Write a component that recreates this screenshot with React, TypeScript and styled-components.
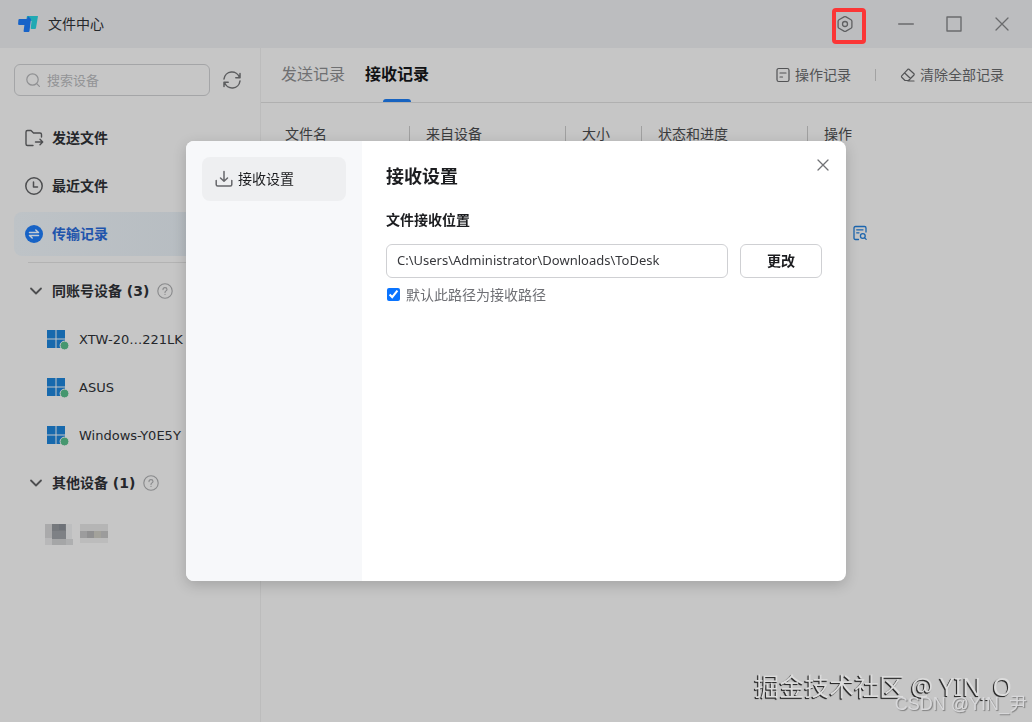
import React from "react";
import styled, { createGlobalStyle, css } from "styled-components";

const GlobalStyle = createGlobalStyle`
  *, *::before, *::after { box-sizing: border-box; }
  body {
    margin: 0;
    background: #c6c6c6;
    color: #25272b;
    font-family: "Noto Sans", "Noto Sans CJK SC", sans-serif;
    font-size: 14px;
    line-height: 20px;
  }
  button, input {
    font: inherit;
    color: inherit;
  }
  button {
    padding: 0;
    border: 0;
    background: none;
    cursor: pointer;
  }
  svg { display: block; flex: none; }
`;

const Window = styled.div`
  min-height: 100vh;
  display: flex;
  flex-direction: column;
  overflow: hidden;
`;

const TitleBar = styled.header`
  height: 48px;
  padding: 0 22px 0 18px;
  display: flex;
  align-items: center;
  background: #bcbdbf;
`;

const Title = styled.h1`
  margin: 0 auto 0 10px;
  font-size: 14px;
  font-weight: 400;
`;

const WindowControls = styled.div`
  display: flex;
  align-items: center;
  gap: 32px;
  color: #6a6b6d;
`;

const ControlButton = styled.button`
  width: 16px;
  height: 16px;
  display: grid;
  place-items: center;
`;

const RefreshButton = styled.button`
  width: 20px;
  height: 20px;
`;

const SettingsHighlight = styled.div`
  height: 36px;
  width: 34px;
  margin: 4px 32px 0 0;
  padding: 0 0 4px 1px;
  display: flex;
  align-items: center;
  border: 4px solid #fb3636;
  border-radius: 4px;
  color: #5f6062;
`;

const Body = styled.div`
  flex: 1;
  display: flex;
`;

const Sidebar = styled.aside`
  width: 261px;
  flex: none;
  padding: 16px 14px;
  border-right: 1px solid #bcbcbc;
`;

const SearchRow = styled.div`
  display: flex;
  align-items: center;
  gap: 12px;
  color: #5c5d5f;
`;

const SearchField = styled.label`
  width: 196px;
  height: 32px;
  padding: 0 11px 1px;
  display: flex;
  align-items: center;
  gap: 7px;
  border: 1px solid #a4a5a7;
  border-radius: 6px;
  color: #8f9092;
`;

const SearchInput = styled.input`
  min-width: 0;
  flex: 1;
  padding: 0;
  border: 0;
  outline: 0;
  background: none;
  font-size: 13px;
  &::placeholder { color: #939496; opacity: 1; }
`;

const Nav = styled.nav`
  margin-top: 20px;
  padding-bottom: 6px;
  display: flex;
  flex-direction: column;
  gap: 4px;
`;

const NavItem = styled.button<{ $active?: boolean }>`
  height: 44px;
  padding: 0 10px;
  display: flex;
  align-items: center;
  gap: 8px;
  border-radius: 8px;
  font-weight: 700;
  color: #25272b;
  svg { color: #4d4e50; }
  ${(p) =>
    p.$active &&
    css`
      background: linear-gradient(90deg, #bec3c7, #b5bbc0);
      color: #1f54ac;
      svg { color: #1763c6; }
    `}
`;

const Divider = styled.hr`
  margin: 0 0 4px 14px;
  border: 0;
  border-top: 1px solid #b3b3b3;
`;

const Group = styled.section`
  padding-left: 14px;
`;

const GroupHeader = styled.h2`
  height: 48px;
  margin: 0;
  display: flex;
  align-items: center;
  gap: 8px;
  font-size: 14px;
  font-weight: 700;
  svg { color: #4d4e50; }
`;

const Count = styled.span`
  font-family: "DejaVu Sans", sans-serif;
  white-space: pre;
`;

const HelpIcon = styled.span`
  svg { color: #88898b; }
`;

const DeviceList = styled.ul`
  margin: 0;
  padding: 0;
  list-style: none;
`;

const Device = styled.li`
  height: 48px;
  padding: 2px 0 0 19px;
  display: flex;
  align-items: center;
  gap: 10px;
  font-family: "DejaVu Sans", sans-serif;
  font-size: 13px;
  white-space: nowrap;
`;

const HiddenRow = styled(Device)`
  height: 54px;
  padding-left: 17px;
`;

const Main = styled.main`
  flex: 1;
  min-width: 0;
`;

const TabBar = styled.div`
  height: 55px;
  padding: 0 28px 0 20px;
  display: flex;
  justify-content: space-between;
  border-bottom: 1px solid #b0b0b0;
`;

const Tabs = styled.div`
  display: flex;
  gap: 20px;
`;

const Tab = styled.button<{ $active?: boolean }>`
  position: relative;
  height: 54px;
  padding-bottom: 2px;
  font-size: 16px;
  color: #6f7072;
  ${(p) =>
    p.$active &&
    css`
      color: #111214;
      font-weight: 700;
      &::after {
        content: "";
        position: absolute;
        left: 18px;
        bottom: 0;
        width: 28px;
        height: 3px;
        border-radius: 3px 3px 0 0;
        background: #1763c0;
      }
    `}
`;

const Actions = styled.div`
  display: flex;
  align-items: center;
  gap: 24px;
`;

const Separator = styled.span`
  width: 1px;
  height: 12px;
  background: #a2a2a2;
`;

const ActionButton = styled.button`
  display: flex;
  align-items: center;
  gap: 4px;
  color: #525355;
`;

const Records = styled.table`
  width: calc(100% - 8px);
  margin: 20px 0 0 8px;
  table-layout: fixed;
  border-collapse: collapse;
`;

const HeadCell = styled.th<{ $width?: number }>`
  width: ${(p) => (p.$width ? `${p.$width}px` : "auto")};
  height: 22px;
  padding: 0;
  font-weight: 400;
  text-align: left;
  color: #3a3b3d;
  span {
    display: block;
    height: 16px;
    line-height: 16px;
    padding-left: 16px;
  }
  &:not(:first-child) span {
    border-left: 1px solid #a0a0a0;
  }
`;

const Cell = styled.td`
  height: 176px;
  padding: 0 0 0 45px;
`;

const DetailsButton = styled.button`
  display: block;
  color: #1b65ae;
`;

const Backdrop = styled.div`
  position: fixed;
  inset: 0;
  display: grid;
  place-items: center;
`;

const Dialog = styled.section`
  position: relative;
  width: 660px;
  max-width: 100%;
  min-height: 440px;
  display: flex;
  border-radius: 8px;
  overflow: hidden;
  background: #fff;
  box-shadow: 0 4px 14px rgba(0, 0, 0, 0.18);
`;

const DialogNav = styled.nav`
  width: 176px;
  padding: 16px;
  background: #f7f8fa;
`;

const DialogNavItem = styled.button`
  width: 100%;
  height: 44px;
  padding: 0 13px;
  display: flex;
  align-items: center;
  gap: 5px;
  border-radius: 8px;
  background: #eeeff1;
  color: #1c1d20;
  svg { color: #66676b; }
`;

const DialogContent = styled.div`
  flex: 1;
  padding: 24px;
`;

const DialogTitle = styled.h2`
  margin: 0;
  font-size: 18px;
  line-height: 22px;
  color: #1c1d20;
`;

const FieldLabel = styled.label`
  display: block;
  margin-top: 23px;
  font-weight: 700;
  color: #1c1d20;
`;

const PathRow = styled.div`
  margin-top: 14px;
  display: flex;
  gap: 12px;
`;

const PathInput = styled.input`
  flex: 1;
  min-width: 0;
  height: 34px;
  padding: 0 10px 2px;
  border: 1px solid #cfd0d3;
  border-radius: 6px;
  background: #fff;
  color: #37383c;
  font-size: 13px;
`;

const ChangeButton = styled.button`
  width: 82px;
  height: 34px;
  border: 1px solid #cfd0d3;
  border-radius: 6px;
  font-weight: 700;
  color: #1c1d20;
`;

const CheckLabel = styled.label`
  margin-top: 7px;
  display: flex;
  align-items: center;
  gap: 6px;
  color: #6e6f74;
`;

const Checkbox = styled.input`
  width: 13px;
  height: 13px;
  margin: 0 0 2px 1px;
  accent-color: #0a74ff;
`;

const CloseButton = styled.button`
  position: absolute;
  top: 16px;
  right: 15px;
  width: 16px;
  height: 16px;
  display: grid;
  place-items: center;
  color: #707175;
`;

const Watermark = styled.div`
  position: fixed;
  right: 20px;
  bottom: 18px;
  font-size: 25px;
  line-height: 36px;
  color: #dcdcdc;
  text-shadow: -1px 1px 0 #2c2c2c, -1px 1px 1px #2c2c2c;
  white-space: nowrap;
`;

const Credit = styled.div`
  position: fixed;
  right: 5px;
  bottom: 6px;
  font-family: "Liberation Sans", "Noto Sans CJK SC", sans-serif;
  font-size: 18px;
  line-height: 24px;
  color: #d8d8da;
  text-shadow: 1px 1px 1px #808080;
  white-space: nowrap;
`;

type IconProps = { size?: number; width?: number; children: React.ReactNode };

const Icon = ({ size = 20, width = 1.4, children }: IconProps) => (
  <svg width={size} height={size} viewBox={`0 0 ${size} ${size}`} fill="none" stroke="currentColor"
    strokeWidth={width} strokeLinecap="round" strokeLinejoin="round" aria-hidden="true">
    {children}
  </svg>
);

const Logo = () => (
  <svg width="20" height="18" viewBox="0 0 20 18" aria-hidden="true">
    <path d="M9 1H20L18 13Q17.800 14 17 14H13.500Q12.500 14 12.700 13L13.600 6H8Z" fill="#20a9b3" />
    <path d="M1.500 4H9L10 1L13 4L11.500 16Q11.300 17 10.500 17H6.500Q5.400 17 5.600 16L6.400 10H1.200Q0 10 .1 9L.4 5Q.5 4 1.500 4Z" fill="#1763c8" />
  </svg>
);

const Cross = ({ size, reach }: { size: number; reach: number }) => {
  const a = size / 2 - reach;
  const b = size / 2 + reach;
  return (
    <Icon size={size} width={1.3}>
      <path d={`M${a} ${a}L${b} ${b}M${b} ${a}L${a} ${b}`} />
    </Icon>
  );
};

const Chevron = () => (
  <Icon size={16} width={1.8}><path d="M3 5.500L8 10.500L13 5.500" /></Icon>
);

const Help = () => (
  <HelpIcon>
    <Icon size={16} width={1.1}>
      <circle cx="8" cy="8" r="7.200" />
      <path d="M6 6.600Q6 4.600 8 4.600T10 6.400Q10 7.300 9 7.900Q8 8.500 8 9.400M8 11.400V11.500" />
    </Icon>
  </HelpIcon>
);

const WindowsDevice = () => (
  <svg width="22" height="22" viewBox="0 0 22 22" aria-hidden="true">
    <path d="M0 1H8.500V9.500H0ZM9.500 1H18V9.500H9.500ZM0 10.500H8.500V19H0ZM9.500 10.500H18V19H9.500Z" fill="#1769ad" />
    <circle cx="17.500" cy="16.500" r="4.400" fill="#46976f" stroke="#c6c6c6" />
  </svg>
);

const mosaic = [
  [0, 0, 7, 14, "#aaaaab"], [7, 0, 14, 7, "#76797d"], [7, 7, 14, 8, "#7e8185"], [14, 0, 6, 6, "#6e7278"],
  [21, 0, 6, 15, "#bdbebf"], [0, 14, 7, 7, "#b8b8b9"], [7, 15, 14, 6, "#a5a6a7"], [21, 15, 7, 6, "#aeafb0"],
  [35, 0, 28, 7, "#b5b5b5"], [35, 7, 7, 7, "#9c9c9d"], [42, 7, 7, 7, "#909091"], [49, 7, 7, 7, "#a3a29b"],
  [56, 7, 7, 7, "#9c9c9c"], [35, 14, 28, 5, "#bcbcbc"],
] as const;

const HiddenDevice = () => (
  <svg width="63" height="22" viewBox="0 0 63 22" role="img" aria-label="设备">
    {mosaic.map(([x, y, w, h, fill], i) => (
      <rect key={i} x={x} y={y} width={w} height={h} fill={fill} />
    ))}
  </svg>
);

const devices = ["XTW-20…221LK", "ASUS", "Windows-Y0E5Y"];

const columns: { label: string; width?: number }[] = [
  { label: "文件名", width: 140 },
  { label: "来自设备", width: 156 },
  { label: "大小", width: 76 },
  { label: "状态和进度", width: 166 },
  { label: "操作" },
];

export default function App() {
  return (
    <>
      <GlobalStyle />
      <Window>
        <TitleBar>
          <Logo />
          <Title>文件中心</Title>
          <SettingsHighlight>
            <ControlButton aria-label="设置">
              <Icon size={16} width={1.3}>
                <path d="M7 .9Q8 .4 9 .9L14 3.700Q14.900 4.300 14.900 5.300V10.700Q14.900 11.700 14 12.300L9 15.100Q8 15.600 7 15.100L2 12.300Q1.100 11.700 1.100 10.700V5.300Q1.100 4.300 2 3.700Z" />
                <circle cx="8" cy="8" r="2.500" />
              </Icon>
            </ControlButton>
          </SettingsHighlight>
          <WindowControls>
            <ControlButton aria-label="最小化">
              <Icon size={16}><path d="M.7 8H15.300" /></Icon>
            </ControlButton>
            <ControlButton aria-label="最大化">
              <Icon size={16}><path d="M1 1H15V15H1Z" /></Icon>
            </ControlButton>
            <ControlButton aria-label="关闭">
              <Cross size={16} reach={6} />
            </ControlButton>
          </WindowControls>
        </TitleBar>

        <Body>
          <Sidebar>
            <SearchRow>
              <SearchField>
                <Icon size={14} width={1.2}>
                  <circle cx="6.500" cy="6.500" r="5.700" />
                  <path d="M10.700 10.700L13.400 13.400" />
                </Icon>
                <SearchInput type="search" placeholder="搜索设备" aria-label="搜索设备" />
              </SearchField>
              <RefreshButton aria-label="刷新">
                <Icon size={20} width={1.5}>
                  <path d="M2 9A8 8 0 0 1 17.500 7.500M18 3.500V7.800H13.800M18 11A8 8 0 0 1 2.500 12.500M2 16.500V12.200H6.200" />
                </Icon>
              </RefreshButton>
            </SearchRow>

            <Nav>
              <NavItem>
                <Icon>
                  <path d="M9 17.500H3.500Q2 17.500 2 16V4Q2 2.500 3.500 2.500H7L9.500 5H16Q17.500 5 17.500 6.500V9M11.500 14H18.500M16 11.300L18.700 14L16 16.700" />
                </Icon>
                发送文件
              </NavItem>
              <NavItem>
                <Icon width={1.5}><circle cx="10" cy="10" r="8.200" /><path d="M9.500 6V11H13.500" /></Icon>
                最近文件
              </NavItem>
              <NavItem $active>
                <svg width="20" height="20" viewBox="0 0 20 20" aria-hidden="true">
                  <circle cx="10" cy="10" r="9" fill="currentColor" />
                  <path d="M5.500 8.500H14.500L11.800 6M14.500 11.500H5.500L8.200 14" fill="none" stroke="#c3cbd3" strokeWidth="1.5" strokeLinecap="round" strokeLinejoin="round" />
                </svg>
                传输记录
              </NavItem>
            </Nav>
            <Divider />

            <Group>
              <GroupHeader>
                <Chevron />
                <span>同账号设备<Count> (3)</Count></span>
                <Help />
              </GroupHeader>
              <DeviceList>
                {devices.map((name) => (
                  <Device key={name}><WindowsDevice />{name}</Device>
                ))}
              </DeviceList>
            </Group>
            <Group>
              <GroupHeader>
                <Chevron />
                <span>其他设备<Count> (1)</Count></span>
                <Help />
              </GroupHeader>
              <DeviceList>
                <HiddenRow><HiddenDevice /></HiddenRow>
              </DeviceList>
            </Group>
          </Sidebar>

          <Main>
            <TabBar>
              <Tabs>
                <Tab>发送记录</Tab>
                <Tab $active>接收记录</Tab>
              </Tabs>
              <Actions>
                <ActionButton>
                  <Icon size={16} width={1.2}>
                    <rect x="2" y="1.500" width="12" height="13" rx="1.800" />
                    <path d="M5 6H11M5 10H7.500" />
                  </Icon>
                  操作记录
                </ActionButton>
                <Separator />
                <ActionButton>
                  <Icon size={16} width={1.2}>
                    <path d="M9 2.300L14 6.700Q14.500 7.300 14 8L8.500 13.500H5L1.700 10.300Q1.200 9.500 1.700 8.900L7.800 2.300Q8.400 1.800 9 2.300ZM4.700 6L10.500 11.500M8 14H14" />
                  </Icon>
                  清除全部记录
                </ActionButton>
              </Actions>
            </TabBar>
            <Records>
              <thead>
                <tr>
                  {columns.map((c) => (
                    <HeadCell key={c.label} $width={c.width} scope="col"><span>{c.label}</span></HeadCell>
                  ))}
                </tr>
              </thead>
              <tbody>
                <tr>
                  <Cell colSpan={4} />
                  <Cell>
                    <DetailsButton aria-label="查看详情">
                      <Icon size={16} width={1.3}>
                        <path d="M6.500 14.500H3.500Q2 14.500 2 13V3Q2 1.500 3.500 1.500H12.500Q14 1.500 14 3V7M4.700 4.800H11M4.700 7.800H7" />
                        <circle cx="10.800" cy="11" r="2.400" />
                        <path d="M12.700 12.900L14.200 14.400" />
                      </Icon>
                    </DetailsButton>
                  </Cell>
                </tr>
              </tbody>
            </Records>
          </Main>
        </Body>
      </Window>

      <Backdrop>
        <Dialog role="dialog" aria-modal="true" aria-labelledby="dialog-title">
          <DialogNav>
            <DialogNavItem>
              <Icon size={18} width={1.5}>
                <path d="M9 1.500V11M5.500 8L9 11.300L12.500 8M1.200 10.500V14.500Q1.200 16 2.700 16H15.300Q16.800 16 16.800 14.500V10.500" />
              </Icon>
              接收设置
            </DialogNavItem>
          </DialogNav>
          <DialogContent>
            <DialogTitle id="dialog-title">接收设置</DialogTitle>
            <FieldLabel htmlFor="path">文件接收位置</FieldLabel>
            <PathRow>
              <PathInput id="path" type="text" readOnly value="C:\Users\Administrator\Downloads\ToDesk" />
              <ChangeButton>更改</ChangeButton>
            </PathRow>
            <CheckLabel>
              <Checkbox type="checkbox" defaultChecked />
              默认此路径为接收路径
            </CheckLabel>
          </DialogContent>
          <CloseButton aria-label="关闭设置"><Cross size={16} reach={5} /></CloseButton>
        </Dialog>
      </Backdrop>

      <Watermark>掘金技术社区 @ YIN_O</Watermark>
      <Credit>CSDN @YIN_尹</Credit>
    </>
  );
}
